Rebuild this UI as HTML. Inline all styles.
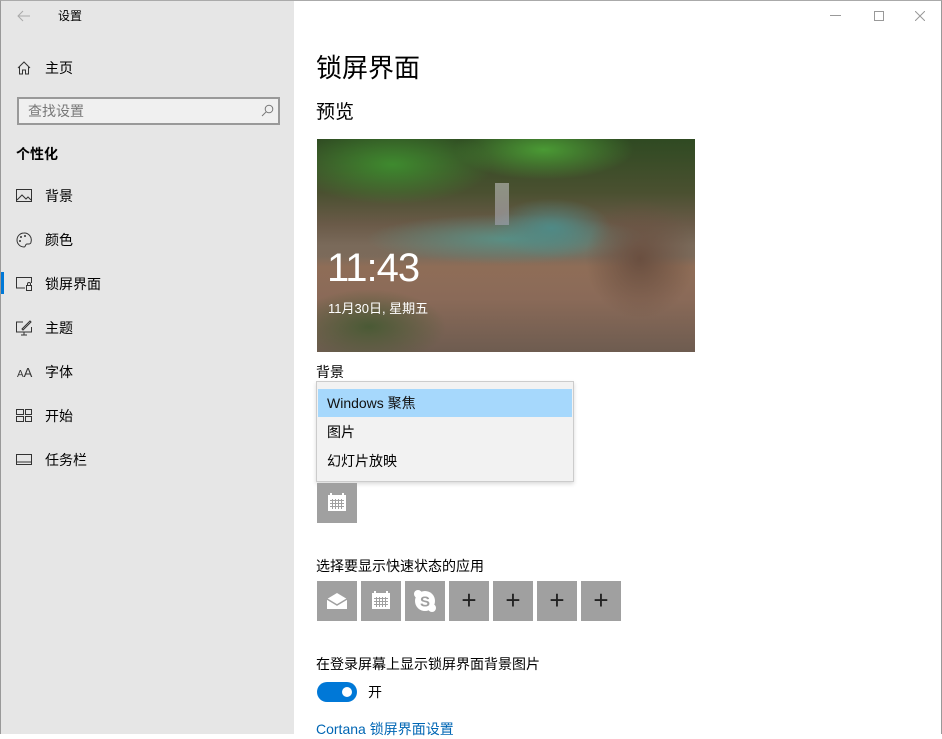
<!DOCTYPE html>
<html><head><meta charset="utf-8"><style>
*{margin:0;padding:0;box-sizing:border-box}
body{width:942px;height:734px;overflow:hidden;font-family:"Liberation Sans","Noto Sans CJK SC",sans-serif;background:#fff;position:relative;color:#000}
.side{position:absolute;left:0;top:0;width:294px;height:734px;background:#e6e6e6;border-left:1px solid #999;border-top:1px solid #aaa}
.t{position:absolute;white-space:nowrap}
.nav{position:absolute;left:44px;font-size:14px;color:#000}
.ic{position:absolute;left:15px}
.main{position:absolute;left:294px;top:0;right:0;height:734px;border-top:1px solid #aaa;border-right:1px solid #999}
.tile{position:absolute;top:580px;width:40px;height:40px;background:#a0a0a0}
.plus{color:#222;font-size:26px;text-align:center;line-height:38px;font-weight:300}
</style></head><body>
<div class="side">
  <svg class="ic" style="left:15px;top:8px" width="16" height="14"><path d="M14 7H2M7 2L2 7l5 5" stroke="#aaa" fill="none" stroke-width="1"/></svg>
  <div class="t" style="left:57px;top:6px;font-size:12px">设置</div>
  <svg class="ic" style="top:59px" width="16" height="16"><path d="M2 8L8 2l6 6M3.5 7v7h3v-4h3v4h3V7" stroke="#333" fill="none"/></svg>
  <div class="nav" style="top:57px">主页</div>
  <div style="position:absolute;left:16px;top:96px;width:263px;height:28px;border:2px solid #999;background:#f0f0f0"></div>
  <div class="t" style="left:27px;top:100px;font-size:14px;color:#777">查找设置</div>
  <svg style="position:absolute;left:260px;top:103px" width="13" height="13"><circle cx="8" cy="5" r="3.8" stroke="#777" fill="none"/><path d="M5.3 7.7L1 12" stroke="#777"/></svg>
  <div class="t" style="left:15px;top:143px;font-size:14px;font-weight:bold">个性化</div>
  <svg class="ic" style="top:188px" width="16" height="14"><rect x="0.5" y="0.5" width="15" height="12" stroke="#333" fill="none"/><path d="M1 11l5-5 4 4 2-2 3 3" stroke="#333" fill="none"/></svg>
  <div class="nav" style="top:185px">背景</div>
  <svg class="ic" style="top:231px" width="16" height="16"><path d="M8 1a7 7 0 1 0 0 14c2 0 1-3 3-3h2a2 2 0 0 0 2-2A7 7 0 0 0 8 1z" stroke="#333" fill="none"/><circle cx="5" cy="5" r="1" fill="#333"/><circle cx="9" cy="4" r="1" fill="#333"/><circle cx="4" cy="9" r="1" fill="#333"/></svg>
  <div class="nav" style="top:229px">颜色</div>
  <div style="position:absolute;left:0;top:271px;width:3px;height:22px;background:#0078d7"></div>
  <svg class="ic" style="top:276px" width="16" height="14"><path d="M9 11H0.5V0.5h15V6" stroke="#333" fill="none"/><rect x="10.5" y="8.5" width="5" height="5" stroke="#333" fill="none"/><path d="M11.5 8.5V7a1.5 1.5 0 0 1 3 0v1.5" stroke="#333" fill="none"/></svg>
  <div class="nav" style="top:273px">锁屏界面</div>
  <svg class="ic" style="top:319px" width="16" height="16"><path d="M7 2H0.5v10h15V7M5 15h6M8 12v3M6 9l8-8 1 1-8 8z" stroke="#333" fill="none"/></svg>
  <div class="nav" style="top:317px">主题</div>
  <div class="t" style="left:16px;top:364px;font-size:10px;color:#333">A<span style="font-size:13px">A</span></div>
  <div class="nav" style="top:361px">字体</div>
  <svg class="ic" style="top:408px" width="16" height="14"><rect x="0.5" y="0.5" width="7" height="5" stroke="#333" fill="none"/><rect x="0.5" y="7.5" width="7" height="5" stroke="#333" fill="none"/><rect x="9.5" y="0.5" width="6" height="5" stroke="#333" fill="none"/><rect x="9.5" y="7.5" width="6" height="5" stroke="#333" fill="none"/></svg>
  <div class="nav" style="top:405px">开始</div>
  <svg class="ic" style="top:453px" width="16" height="12"><rect x="0.5" y="0.5" width="15" height="10" stroke="#333" fill="none"/><path d="M1 8h14" stroke="#333"/></svg>
  <div class="nav" style="top:449px">任务栏</div>
</div>
<div class="main">
  <div style="position:absolute;left:536px;top:14px;width:11px;height:1px;background:#999"></div>
  <div style="position:absolute;left:580px;top:10px;width:10px;height:10px;border:1px solid #999"></div>
  <svg style="position:absolute;left:621px;top:10px" width="10" height="10"><path d="M0 0L10 10M10 0L0 10" stroke="#999"/></svg>
  <div class="t" style="left:22px;top:47px;font-size:26px">锁屏界面</div>
  <div class="t" style="left:22px;top:96px;font-size:19px">预览</div>
  <div style="position:absolute;left:23px;top:138px;width:378px;height:213px;overflow:hidden;
   background:
   radial-gradient(ellipse 60px 30px at 62% 42%,#4f8a86,transparent),
   radial-gradient(ellipse 140px 25px at 50% 47%,#5a8f84,transparent),
   linear-gradient(180deg,transparent 0%,transparent 55%,rgba(150,110,85,.7) 60%,#8a6a58 75%,#6e5c50 100%),
   radial-gradient(ellipse 100px 40px at 20% 12%,#3e8a2e,transparent),
   radial-gradient(ellipse 90px 30px at 60% 5%,#4a9a34,transparent),
   linear-gradient(180deg,#2f4a22 0%,#4a5030 25%,#6a5a48 40%,#7a6a5a 50%,#8a7060 100%);">
    <div style="position:absolute;left:178px;top:44px;width:14px;height:42px;background:linear-gradient(#ccc,#aab);opacity:.55"></div>
    <div style="position:absolute;left:0;top:150px;width:130px;height:63px;background:radial-gradient(ellipse at 40% 60%,#4a5a35,transparent 70%)"></div>
    <div style="position:absolute;right:0;top:60px;width:110px;height:120px;background:radial-gradient(ellipse,#6a4f40,transparent 70%)"></div>
    <div class="t" style="left:10px;top:107px;font-size:40px;color:#fff;font-weight:300;letter-spacing:-1px">11:43</div>
    <div class="t" style="left:11px;top:159px;font-size:13px;color:#fff">11月30日, 星期五</div>
  </div>
  <div class="t" style="left:22px;top:361px;font-size:14px">背景</div>
  <div style="position:absolute;left:22px;top:380px;width:258px;height:101px;background:#f2f2f2;border:1px solid #ccc;box-shadow:0 2px 4px rgba(0,0,0,.15)">
    <div style="position:absolute;left:1px;top:7px;width:254px;height:28px;background:#a6d8fc"></div>
    <div class="t" style="left:10px;top:11px;font-size:14px;color:#111">Windows 聚焦</div>
    <div class="t" style="left:10px;top:40px;font-size:14px">图片</div>
    <div class="t" style="left:10px;top:69px;font-size:14px">幻灯片放映</div>
  </div>
  <div class="tile" style="left:23px;top:482px">
    <svg width="40" height="40"><rect x="11" y="12" width="18" height="16" fill="#fff"/><rect x="13" y="10" width="2" height="4" fill="#fff"/><rect x="25" y="10" width="2" height="4" fill="#fff"/><g fill="#a0a0a0"><rect x="13" y="17" width="14" height="1"/><rect x="13" y="20" width="14" height="1"/><rect x="13" y="23" width="14" height="1"/><rect x="15" y="16" width="1" height="10"/><rect x="18" y="16" width="1" height="10"/><rect x="21" y="16" width="1" height="10"/><rect x="24" y="16" width="1" height="10"/></g></svg>
  </div>
  <div class="t" style="left:22px;top:555px;font-size:14px">选择要显示快速状态的应用</div>
  <div class="tile" style="left:23px"><svg width="40" height="40"><path d="M10 18l10-6 10 6v10H10z" fill="#fff"/><path d="M10 18l10 6 10-6" stroke="#a0a0a0" fill="none" stroke-width="1.5"/></svg></div>
  <div class="tile" style="left:67px"><svg width="40" height="40"><rect x="11" y="12" width="18" height="16" fill="#fff"/><rect x="13" y="10" width="2" height="4" fill="#fff"/><rect x="25" y="10" width="2" height="4" fill="#fff"/><g fill="#a0a0a0"><rect x="13" y="17" width="14" height="1"/><rect x="13" y="20" width="14" height="1"/><rect x="13" y="23" width="14" height="1"/><rect x="15" y="16" width="1" height="10"/><rect x="18" y="16" width="1" height="10"/><rect x="21" y="16" width="1" height="10"/><rect x="24" y="16" width="1" height="10"/></g></svg></div>
  <div class="tile" style="left:111px"><svg width="40" height="40"><circle cx="20" cy="20" r="10" fill="#fff"/><circle cx="13" cy="13" r="4" fill="#fff"/><circle cx="27" cy="27" r="4" fill="#fff"/><text x="20" y="25.5" font-size="15" font-weight="bold" text-anchor="middle" fill="#a0a0a0" font-family="Liberation Sans">S</text></svg></div>
  <div class="tile plus" style="left:155px">+</div>
  <div class="tile plus" style="left:199px">+</div>
  <div class="tile plus" style="left:243px">+</div>
  <div class="tile plus" style="left:287px">+</div>
  <div class="t" style="left:22px;top:653px;font-size:14px">在登录屏幕上显示锁屏界面背景图片</div>
  <div style="position:absolute;left:23px;top:681px;width:40px;height:20px;border-radius:10px;background:#0078d7"><div style="position:absolute;right:5px;top:5px;width:10px;height:10px;border-radius:5px;background:#fff"></div></div>
  <div class="t" style="left:74px;top:681px;font-size:14px">开</div>
  <div class="t" style="left:22px;top:718px;font-size:14px;color:#0066b4">Cortana 锁屏界面设置</div>
</div>
</body></html>
